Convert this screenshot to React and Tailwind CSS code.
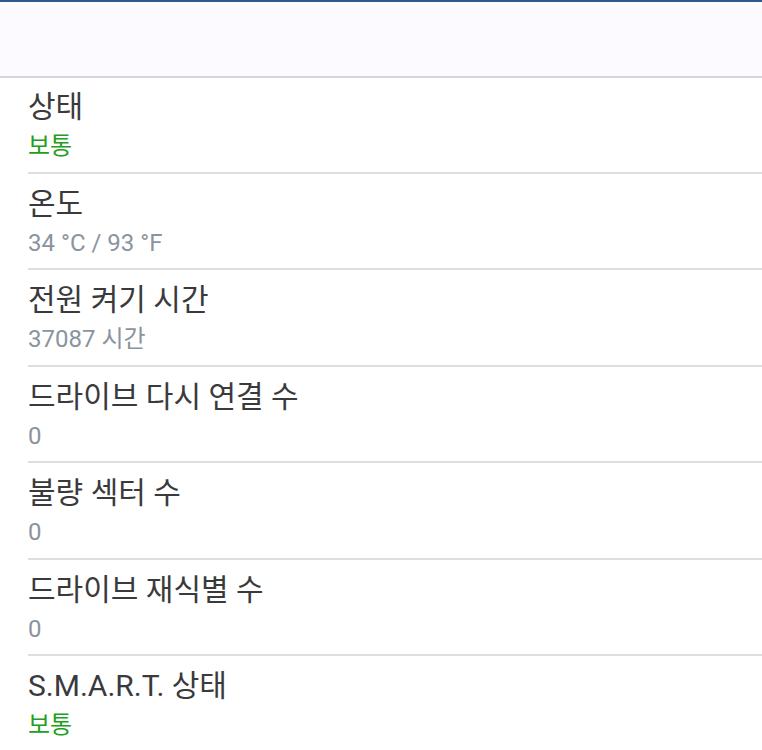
import React from "react";

const rows = [
  { title: "상태", value: "보통", green: true },
  { title: "온도", value: "34 °C / 93 °F" },
  { title: "전원 켜기 시간", value: "37087 시간" },
  { title: "드라이브 다시 연결 수", value: "0" },
  { title: "불량 섹터 수", value: "0" },
  { title: "드라이브 재식별 수", value: "0" },
  { title: "S.M.A.R.T. 상태", value: "보통", green: true },
];

export default function App() {
  return (
    <div
      className="w-[762px] h-[750px] overflow-hidden bg-white"
      style={{ fontFamily: 'Roboto, "Noto Sans CJK KR", sans-serif' }}
    >
      <div className="h-[2px] bg-[#2b5a8b]" />
      <div className="h-[76px] bg-[#fdfaff] border-b-2 border-[#d6d6dc]" />
      <div className="pl-[28px]">
        {rows.map((r, i) => (
          <div
            key={i}
            className={
              "border-b-2 border-[#dedee2] flex flex-col " +
              (i === 0 ? "h-[95.5px] pt-[9px]" : "h-[96.5px] pt-[10px]")
            }
          >
            <div className="text-[30px] leading-[40px] text-[#3a3a3c]">{r.title}</div>
            <div
              className={
                "text-[24px] leading-[32px] mt-[3px] " +
                (r.green ? "text-[#22a01a]" : "text-[#8a949e]")
              }
            >
              {r.value}
            </div>
          </div>
        ))}
      </div>
    </div>
  );
}
